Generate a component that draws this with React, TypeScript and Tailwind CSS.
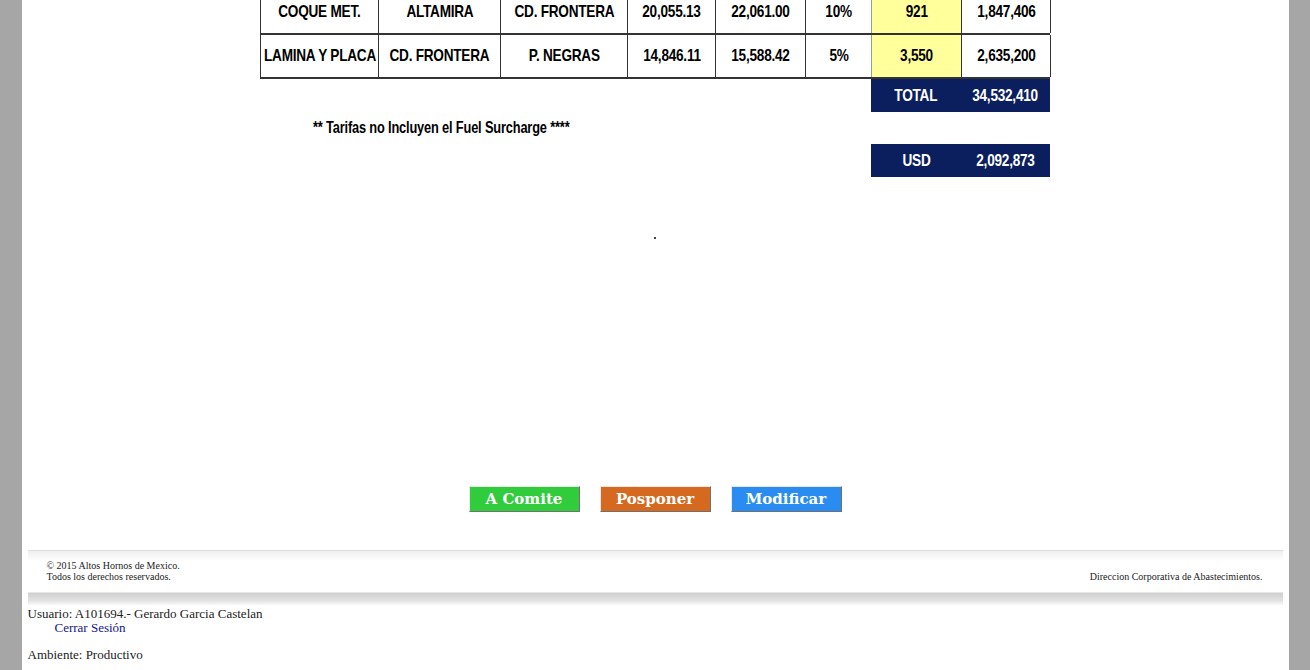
import React from "react";

const narrow = { fontFamily: '"Liberation Sans", Arial, sans-serif' };

const cell = "flex items-center justify-center border-r border-[#333] text-[17px] font-bold text-black whitespace-nowrap overflow-hidden";

const rows = [
  ["COQUE MET.", "ALTAMIRA", "CD. FRONTERA", "20,055.13", "22,061.00", "10%", "921", "1,847,406"],
  ["LAMINA Y PLACA", "CD. FRONTERA", "P. NEGRAS", "14,846.11", "15,588.42", "5%", "3,550", "2,635,200"],
];

const Narrow = ({ children }: { children: React.ReactNode }) => {
  return <span className="inline-block scale-x-[0.8] origin-center tracking-[-0.3px]">{children}</span>;
};

const ActionButton = ({ label, color }: { label: string; color: string }) => {
  return (
    <button
      className={`w-[111px] h-[26px] border border-t-[#e8e8e8] border-l-[#e8e8e8] border-r-[#707070] border-b-[#707070] text-white text-[15px] font-bold leading-none ${color}`}
      style={{ fontFamily: '"DejaVu Serif", "Liberation Serif", serif' }}
    >
      {label}
    </button>
  );
};

const App = () => {
  return (
    <div className="w-full min-h-screen bg-[#a6a6a6] flex justify-center overflow-hidden">
      <div className="w-[1267px] h-[670px] bg-white flex flex-col items-center overflow-hidden">
        <div className="w-[790px] -mt-[9px] flex flex-col" style={narrow}>
          <div className="border-l border-[#333]">
            {rows.map((r, i) => (
              <div key={i} className="grid grid-cols-[118px_122px_127px_88px_90px_66px_90px_89px] h-[44px] border-b-2 border-[#333]">
                {r.map((t, j) => (
                  <div
                    key={j}
                    className={`${cell} ${j === 6 ? "bg-[#ffff9c]" : ""} ${j === 5 ? "border-[#999]" : ""}`}
                  >
                    <Narrow>{t}</Narrow>
                  </div>
                ))}
              </div>
            ))}
          </div>
          <div className="flex justify-end">
            <div className="w-[179px] h-[33px] bg-[#0b1f5e] flex items-center text-white text-[17px] font-bold whitespace-nowrap">
              <span className="w-[90px] text-center"><Narrow>TOTAL</Narrow></span>
              <span className="w-[89px] text-center"><Narrow>34,532,410</Narrow></span>
            </div>
          </div>
          <div className="pl-[53px] h-[32px] flex items-center text-[16px] font-bold text-black whitespace-nowrap">
            <span className="inline-block scale-x-[0.8] origin-left tracking-[-0.2px]">** Tarifas no Incluyen el Fuel Surcharge ****</span>
          </div>
          <div className="flex justify-end">
            <div className="w-[179px] h-[33px] bg-[#0b1f5e] flex items-center text-white text-[17px] font-bold whitespace-nowrap">
              <span className="w-[90px] text-center"><Narrow>USD</Narrow></span>
              <span className="w-[89px] text-center"><Narrow>2,092,873</Narrow></span>
            </div>
          </div>
        </div>

        <div className="mt-[60px] w-[2px] h-[2px] bg-[#444]" />

        <div className="mt-[247px] flex gap-[20px]">
          <ActionButton label="A Comite" color="bg-[#30cc3c]" />
          <ActionButton label="Posponer" color="bg-[#d4691f]" />
          <ActionButton label="Modificar" color="bg-[#2a8cf0]" />
        </div>

        <div
          className="mt-[38px] w-[1255px] h-[55px] border-t border-[#dcdcdc] flex flex-col text-[10px] text-[#222] leading-[11px]"
          style={{ fontFamily: '"Liberation Serif", serif', backgroundImage: "linear-gradient(to bottom, #efefef 0px, #ffffff 10px, #ffffff 41px, #cfcfcf 42px, #e4e4e4 50px, #ffffff 55px)" }}
        >
          <div className="flex justify-between px-[19px] pr-[20px] mt-[9px]">
            <div>
              <div>© 2015 Altos Hornos de Mexico.</div>
              <div>Todos los derechos reservados.</div>
            </div>
            <div className="self-end">Direccion Corporativa de Abastecimientos.</div>
          </div>
        </div>

        <div className="w-[1255px] mt-[2px] text-[13px] text-[#222] leading-[14px]" style={{ fontFamily: '"Liberation Serif", serif' }}>
          <div>Usuario: A101694.- Gerardo Garcia Castelan</div>
          <div className="pl-[27px] text-[#14148a]">Cerrar Sesión</div>
          <div className="mt-[13px]">Ambiente: Productivo</div>
        </div>
      </div>
    </div>
  );
};

export default App;
